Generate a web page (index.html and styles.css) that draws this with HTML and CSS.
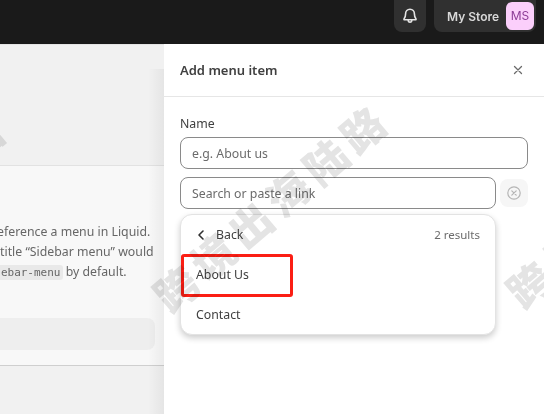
FILE: index.html
```html
<!DOCTYPE html>
<html lang="en">
<head>
<meta charset="utf-8">
<title>Add menu item</title>
<link rel="stylesheet" href="styles.css">
</head>
<body>
<header class="topbar">
  <button class="bell" aria-label="Notifications">
    <svg width="20" height="20" viewBox="0 0 20 20" fill="none" stroke="#e3e3e3" stroke-width="1.6" stroke-linejoin="round" stroke-linecap="round">
      <path d="M10 3.2c-2.6 0-4.4 2-4.400 4.500 0 2.500-.5 3.800-1.500 5-.3.4-.1 1 .4 1h11c.5 0 .7-.6.4-1-1-1.200-1.500-2.500-1.500-5 0-2.500-1.800-4.500-4.400-4.500z"/>
      <path d="M8.200 14c0 1.300.7 2.200 1.800 2.200s1.800-.9 1.800-2.200"/>
    </svg>
  </button>
  <div class="store">
    <span class="store-name">My Store</span>
    <span class="avatar">MS</span>
  </div>
</header>
<main class="stage">
  <section class="backdrop">
    <div class="card">
      <div class="card-copy">
        <p class="line line-a">This handle can be used to reference a menu in Liquid.</p>
        <p class="line line-b">For example, a menu with the title “Sidebar menu” would</p>
        <p class="line line-c">have the handle <code class="handle">sidebar-menu</code> by default.</p>
      </div>
      <div class="card-bar"></div>
    </div>
  </section>
  <aside class="panel">
    <div class="panel-head">
      <h2 class="panel-title">Add menu item</h2>
      <svg class="close" width="12" height="12" viewBox="0 0 12 12" fill="none" stroke="#6b6b6b" stroke-width="1.300" stroke-linecap="round"><path d="M2.500 2.500l7 7M9.500 2.500l-7 7"/></svg>
    </div>
    <div class="panel-body">
      <label class="label">Name</label>
      <div class="input">e.g. About us</div>
      <div class="link-row">
        <div class="input input-link">Search or paste a link</div>
        <span class="clear">
          <svg width="16" height="16" viewBox="0 0 16 16" fill="none" stroke="#b5b5b5" stroke-width="1.200" stroke-linecap="round"><circle cx="8" cy="8" r="6.200"/><path d="M5.800 5.800l4.400 4.400M10.200 5.800l-4.400 4.400"/></svg>
        </span>
      </div>
      <div class="results">
        <div class="results-head">
          <span class="back">
            <svg width="8" height="12" viewBox="0 0 8 12" fill="none" stroke="#303030" stroke-width="1.600" stroke-linecap="round" stroke-linejoin="round"><path d="M6 2L2 6l4 4"/></svg>
            Back
          </span>
          <span class="count">2 results</span>
        </div>
        <div class="result">About Us</div>
        <div class="result">Contact</div>
      </div>
    </div>
  </aside>
  <div class="highlight"></div>
  <div class="mark mark-1">跨境出海陆路</div>
  <div class="mark mark-2">跨境出海陆路</div>
  <div class="mark mark-3">跨境出海陆路</div>
</main>
</body>
</html>
```
FILE: styles.css
```css
* { box-sizing: border-box; }
html, body { margin: 0; height: 100%; overflow: hidden; }
body {
  width: 544px;
  height: 414px;
  display: flex;
  flex-direction: column;
  font-family: "Noto Sans", "Noto Sans CJK SC", sans-serif;
  font-size: 12.300px;
  color: #404040;
  background: #f1f1f1;
}
.topbar {
  height: 44px;
  flex: none;
  background: #1a1a1a;
  display: flex;
  justify-content: flex-end;
  align-items: flex-start;
  gap: 8px;
  padding-right: 8px;
}
.bell {
  width: 32px;
  height: 32px;
  border: 0;
  padding: 0;
  border-radius: 0 0 8px 8px;
  background: #303030;
  display: flex;
  align-items: center;
  justify-content: center;
}
.store {
  width: 102px;
  height: 32px;
  border-radius: 0 0 8px 8px;
  background: #303030;
  display: flex;
  align-items: center;
  justify-content: space-between;
  padding: 0 2px 0 13px;
}
.store-name {
  font-family: Inter, sans-serif;
  font-size: 12px;
  font-weight: 600;
  color: #d8d8d8;
}
.avatar {
  width: 28px;
  height: 28px;
  margin-top: -1px;
  border-radius: 6px;
  background: #fbcffb;
  color: #8c3c96;
  font-family: Inter, sans-serif;
  font-size: 12px;
  display: flex;
  align-items: center;
  justify-content: center;
}
.stage {
  position: relative;
  flex: 1;
  display: flex;
  overflow: hidden;
}
.backdrop {
  position: relative;
  width: 164px;
  flex: none;
  padding-top: 121px;
  background: #f1f1f1;
  border-top: 1px solid #e4e4e4;
  overflow: hidden;
}
.backdrop::after {
  content: "";
  position: absolute;
  top: 24px;
  bottom: 0;
  right: 0;
  width: 16px;
  background: linear-gradient(to right, rgba(0, 0, 0, 0), rgba(0, 0, 0, 0.05));
}
.card {
  width: 164px;
  height: 201px;
  margin-top: -1px;
  background: #f8f8f8;
  border-top: 1px solid #e2e2e2;
  border-bottom: 1px solid #cfcfcf;
  padding-top: 56px;
  overflow: hidden;
}
.card-copy { height: 96px; margin-left: -176px; }
.line {
  margin: 0;
  height: 20px;
  line-height: 20px;
  white-space: nowrap;
  color: #666666;
}
.line-a { margin-left: 11px; }
.line-b { margin-left: 1px; }
.line-c { margin-left: 59px; }
.handle {
  font-family: "DejaVu Sans Mono", monospace;
  font-size: 11px;
  padding: 1px 2px;
  border-radius: 3px;
  background: #e9e9e9;
}
.card-bar {
  width: 155px;
  height: 32px;
  border-radius: 0 8px 8px 0;
  background: #eeeeee;
}
.panel {
  width: 380px;
  flex: none;
  background: #fff;
}
.panel-head {
  height: 53px;
  padding: 0 20px 0 16px;
  border-bottom: 1px solid #e6e6e6;
  display: flex;
  align-items: center;
  justify-content: space-between;
}
.panel-title {
  margin: 0;
  font-size: 13px;
  font-weight: 600;
}
.panel-body { padding: 16px; position: relative; }
.label { display: block; height: 24px; line-height: 22px; }
.input {
  height: 32px;
  border: 1px solid #8a8a8a;
  border-radius: 8px;
  padding: 0 11px;
  line-height: 31px;
  color: #6b6b6b;
  background: transparent;
}
.link-row { display: flex; justify-content: space-between; margin-top: 8px; }
.input-link { width: 316px; }
.clear {
  width: 28px;
  height: 28px;
  margin-top: 2px;
  border-radius: 8px;
  background: #f6f6f6;
  display: flex;
  align-items: center;
  justify-content: center;
}
.results {
  width: 316px;
  margin-top: 5px;
  border: 1px solid #e3e3e3;
  border-radius: 12px;
  background: #fff;
  box-shadow: 0 3px 6px rgba(0, 0, 0, 0.2);
}
.results-head {
  height: 39px;
  padding: 0 15px 0 16px;
  display: flex;
  align-items: center;
  justify-content: space-between;
}
.back { display: flex; align-items: center; gap: 11px; }
.count { color: #6b6b6b; font-size: 11.500px; }
.result { height: 40px; line-height: 41px; padding: 0 15px; }
.highlight {
  position: absolute;
  left: 181px;
  top: 210px;
  width: 112px;
  height: 43px;
  border: 3px solid #fb1e14;
  border-radius: 3px;
}
.mark {
  position: absolute;
  top: 236px;
  font-family: "Noto Sans CJK SC", sans-serif;
  font-size: 42px;
  font-weight: 900;
  line-height: 1;
  letter-spacing: 7px;
  white-space: nowrap;
  color: #e4e4e4;
  mix-blend-mode: multiply;
  transform: rotate(-40.400deg);
  transform-origin: 0 50%;
}
.mark-1 { left: 159px; }
.mark-2 { left: 512px; top: 232px; }
.mark-3 { left: -223px; top: 245px; }
```
